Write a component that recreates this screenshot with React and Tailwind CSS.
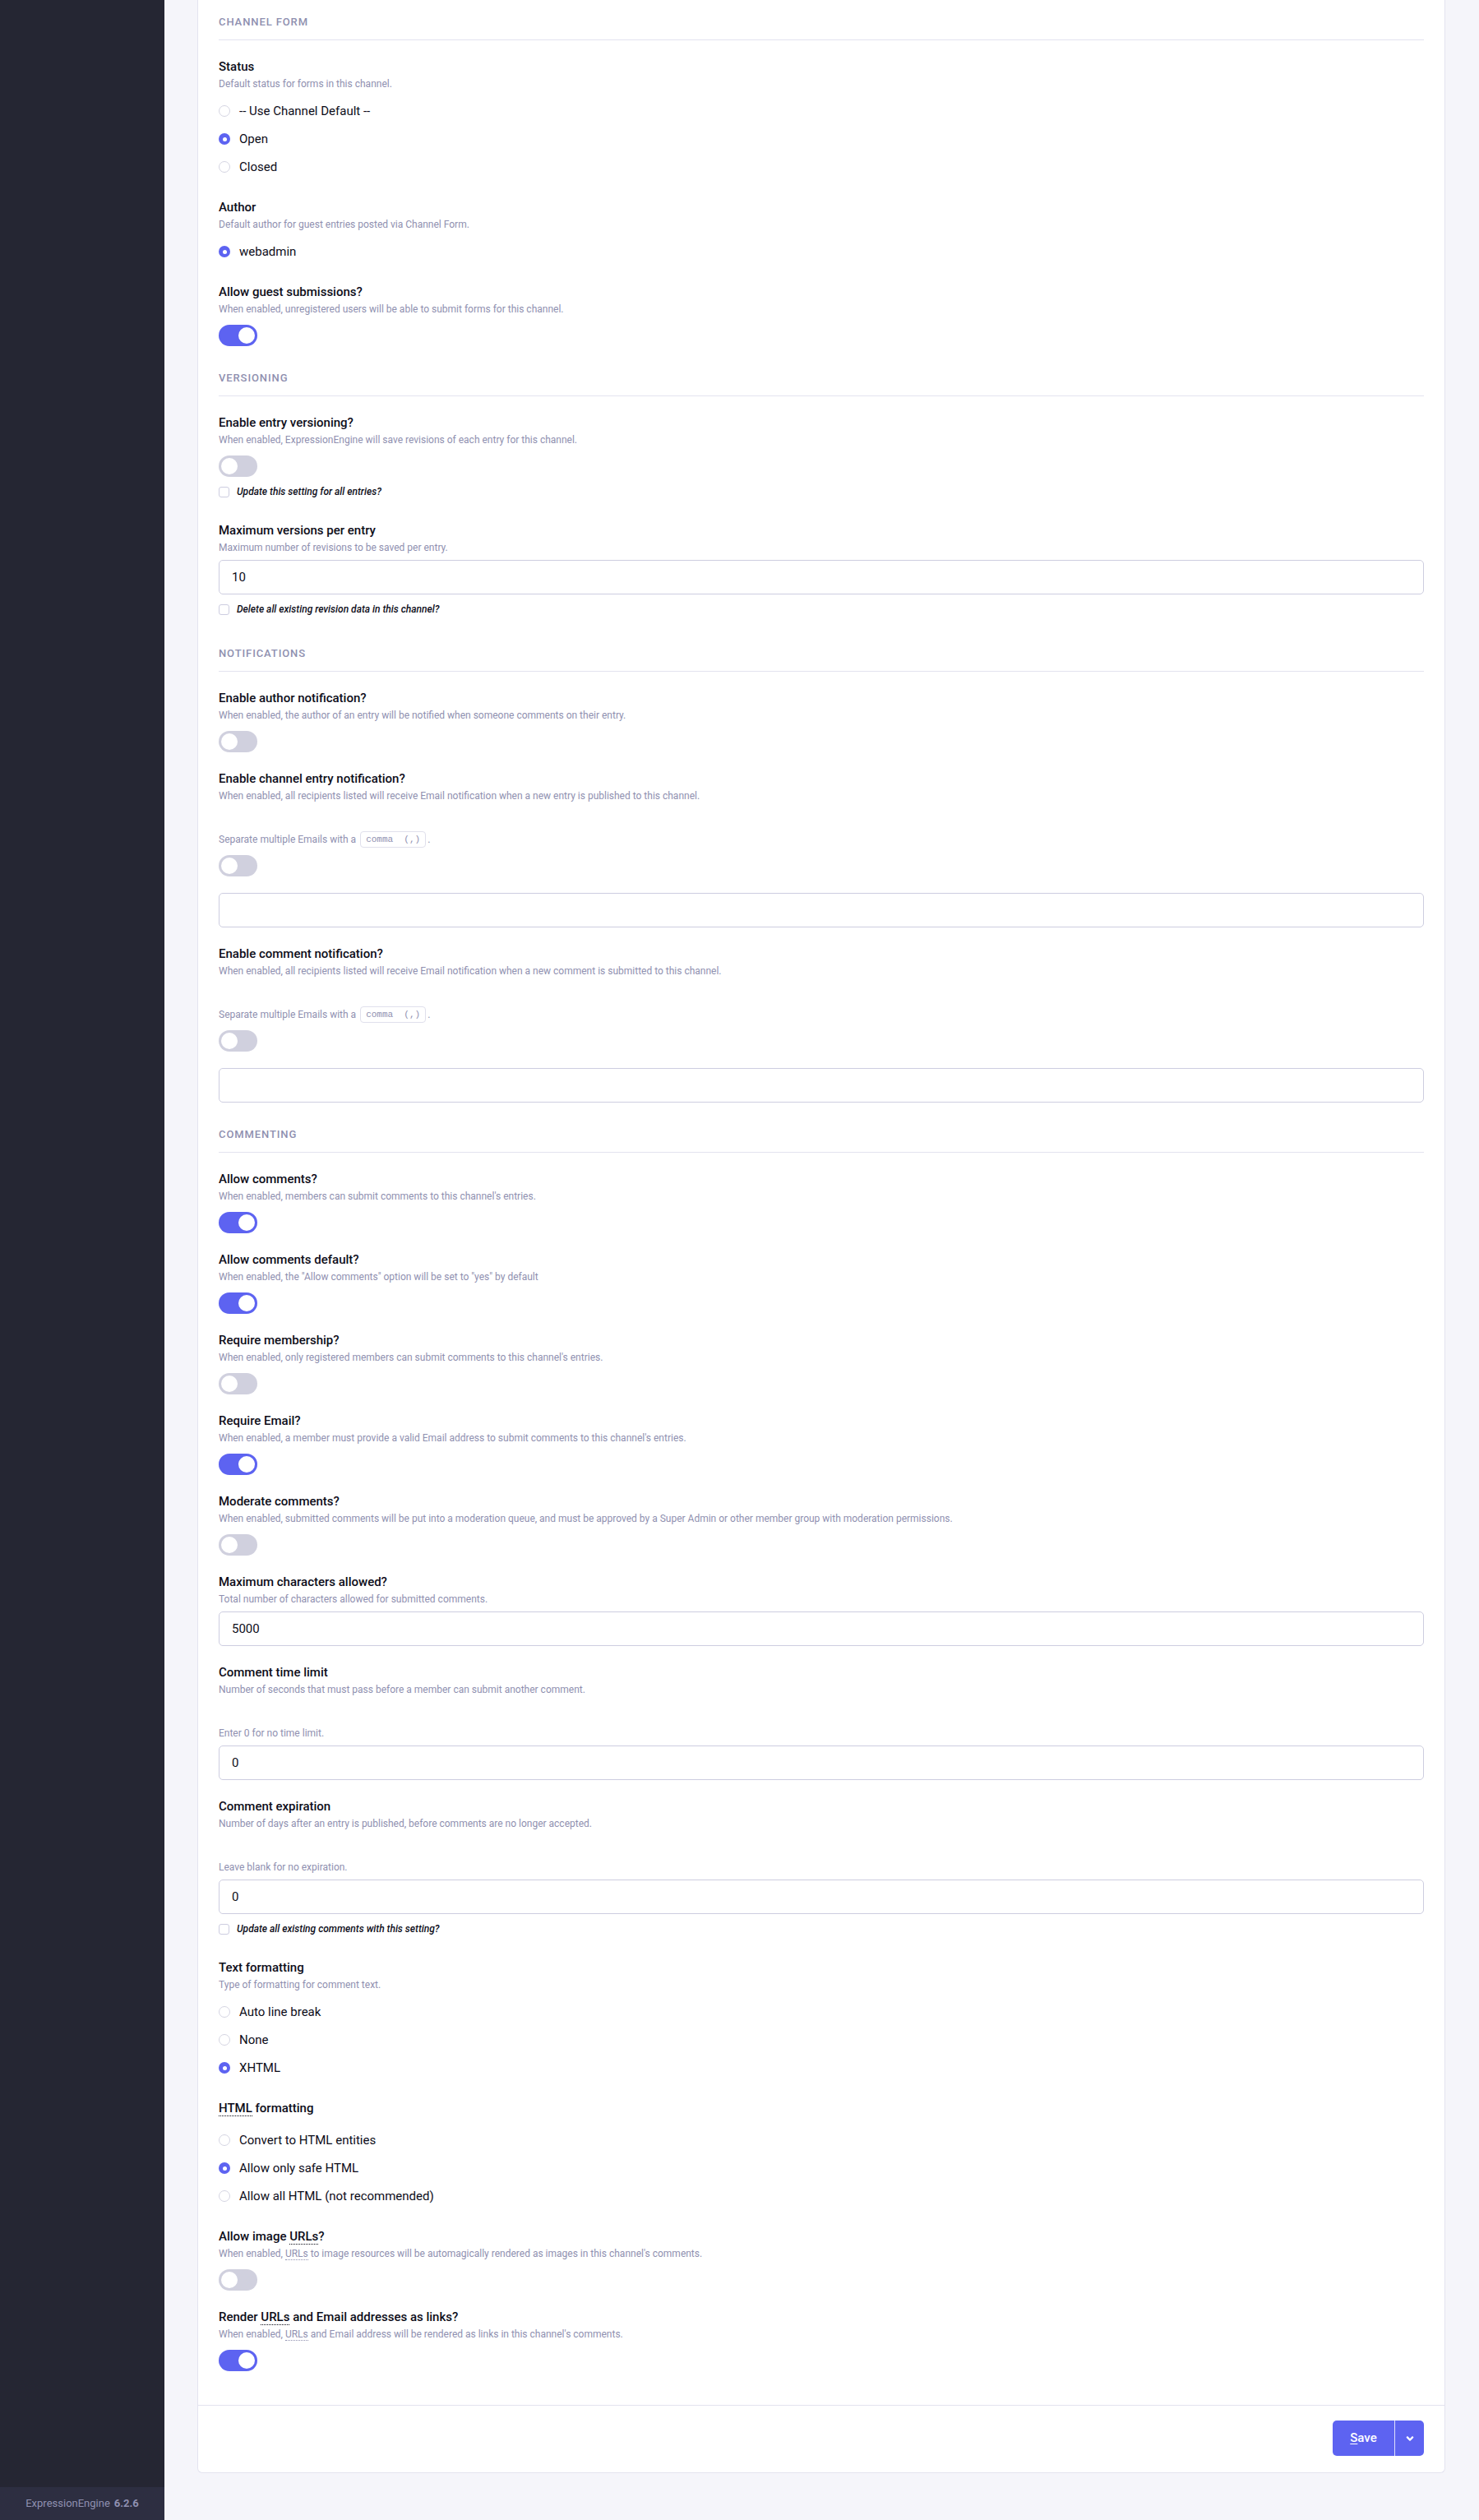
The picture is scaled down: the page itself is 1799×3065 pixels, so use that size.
import React from 'react';
import { FaAngleDown } from 'react-icons/fa';

const font = { fontFamily: 'Roboto, "Noto Sans", sans-serif' };

// section header with rule under it
const SectionHead = ({ title, first }) => (
  <div
    className={`${first ? 'pt-[19px]' : 'pt-[31px]'} pb-[13px] border-b border-[#e3e3ef]`}
  >
    <h3 className="text-[13px] leading-4 font-medium uppercase tracking-[0.9px] text-[#8f90b0]">
      {title}
    </h3>
  </div>
);

const Label = ({ children }) => (
  <div className="text-[15px] leading-5 font-medium text-[#0d0d19]">{children}</div>
);

const Desc = ({ children }) => (
  <div className="mt-[3px] text-[12px] leading-4 text-[#8f90b0]">{children}</div>
);

const Abbr = ({ children }) => (
  <abbr className="no-underline border-b border-dotted border-current">{children}</abbr>
);

const Toggle = ({ on, className = '' }) => (
  <div
    className={`w-[47px] h-[26px] rounded-full p-[3px] flex ${
      on ? 'bg-[#5d63f1] justify-end' : 'bg-[#d0d0de] justify-start'
    } ${className}`}
  >
    <div className="w-[20px] h-[20px] rounded-full bg-white" />
  </div>
);

const Radio = ({ checked }) =>
  checked ? (
    <span className="w-[14px] h-[14px] rounded-full bg-[#5d63f1] flex items-center justify-center">
      <span className="w-[5px] h-[5px] rounded-full bg-white" />
    </span>
  ) : (
    <span className="w-[14px] h-[14px] rounded-full border border-[#d5d5e2] bg-white" />
  );

const RadioList = ({ options, checked, hasDesc }) => (
  <div className={hasDesc ? 'mt-[8px]' : 'mt-[12px]'}>
    {options.map((opt) => (
      <div key={opt} className="h-[34px] flex items-center gap-[11px]">
        <Radio checked={opt === checked} />
        <span className="text-[15px] leading-5 text-[#0d0d19]">{opt}</span>
      </div>
    ))}
  </div>
);

const Check = ({ label }) => (
  <div className="mt-[8px] mb-[5px] h-[20px] flex items-center gap-[9px]">
    <span className="w-[13px] h-[13px] rounded-[3px] border border-[#cdcde0] bg-white" />
    <span className="text-[12px] italic font-medium text-[#0d0d19]">{label}</span>
  </div>
);

const TextInput = ({ value, className = 'mt-[7px]' }) => (
  <div
    className={`${className} h-[42px] rounded-[5px] border border-[#cdcde0] bg-white px-[15px] flex items-center text-[15px] text-[#0d0d19]`}
  >
    {value}
  </div>
);

const EmailNote = () => (
  <div className="mt-[35px] h-[20px] flex items-center text-[12px] text-[#8f90b0]">
    <span>Separate multiple Emails with a</span>
    <code
      className="ml-[5px] h-[20px] px-[6px] flex items-center rounded-[4px] border border-[#e0e0ec] text-[11px] text-[#8f90b0]"
      style={{ fontFamily: '"Liberation Mono", "DejaVu Sans Mono", monospace' }}
    >
      comma&nbsp;&nbsp;(,)
    </code>
    <span className="ml-[2px]">.</span>
  </div>
);

const Note = ({ children }) => (
  <div className="mt-[37px] text-[12px] leading-4 text-[#8f90b0]">{children}</div>
);

const ToggleField = ({ label, desc, on }) => (
  <div className="pt-[22px]">
    <Label>{label}</Label>
    <Desc>{desc}</Desc>
    <Toggle on={on} className="mt-[11px]" />
  </div>
);

const EmailField = ({ label, desc }) => (
  <div className="pt-[22px]">
    <Label>{label}</Label>
    <Desc>{desc}</Desc>
    <EmailNote />
    <Toggle on={false} className="mt-[9px]" />
    <TextInput value="" className="mt-[20px]" />
  </div>
);

export default function App() {
  return (
    <div className="flex h-[3065px] overflow-hidden bg-[#f5f5fa]" style={font}>
      <aside className="w-[200px] shrink-0 bg-[#252633] flex flex-col">
        <div className="mt-auto h-[40px] bg-[#2d2e41] flex items-center justify-center text-[13px] text-[#8f90b0]">
          ExpressionEngine <span className="ml-[5px] font-bold">6.2.6</span>
        </div>
      </aside>

      <main className="flex-1 pl-[40px] pr-[41px] pb-[54px]">
        <div className="bg-white border-x border-b border-[#e3e3ef] rounded-b-[6px]">
          <div className="px-[25px] pb-[41px]">
            <SectionHead title="Channel Form" first />

            <div className="pt-[22px]">
              <Label>Status</Label>
              <Desc>Default status for forms in this channel.</Desc>
              <RadioList
                hasDesc
                options={['-- Use Channel Default --', 'Open', 'Closed']}
                checked="Open"
              />
            </div>

            <div className="pt-[22px]">
              <Label>Author</Label>
              <Desc>Default author for guest entries posted via Channel Form.</Desc>
              <RadioList hasDesc options={['webadmin']} checked="webadmin" />
            </div>

            <ToggleField
              label="Allow guest submissions?"
              desc="When enabled, unregistered users will be able to submit forms for this channel."
              on
            />

            <SectionHead title="Versioning" />

            <div className="pt-[22px]">
              <Label>Enable entry versioning?</Label>
              <Desc>
                When enabled, ExpressionEngine will save revisions of each entry for this channel.
              </Desc>
              <Toggle on={false} className="mt-[11px]" />
              <Check label="Update this setting for all entries?" />
            </div>

            <div className="pt-[22px]">
              <Label>Maximum versions per entry</Label>
              <Desc>Maximum number of revisions to be saved per entry.</Desc>
              <TextInput value="10" />
              <Check label="Delete all existing revision data in this channel?" />
            </div>

            <SectionHead title="Notifications" />

            <ToggleField
              label="Enable author notification?"
              desc="When enabled, the author of an entry will be notified when someone comments on their entry."
              on={false}
            />
            <EmailField
              label="Enable channel entry notification?"
              desc="When enabled, all recipients listed will receive Email notification when a new entry is published to this channel."
            />
            <EmailField
              label="Enable comment notification?"
              desc="When enabled, all recipients listed will receive Email notification when a new comment is submitted to this channel."
            />

            <SectionHead title="Commenting" />

            <ToggleField
              label="Allow comments?"
              desc="When enabled, members can submit comments to this channel's entries."
              on
            />
            <ToggleField
              label="Allow comments default?"
              desc={'When enabled, the "Allow comments" option will be set to "yes" by default'}
              on
            />
            <ToggleField
              label="Require membership?"
              desc="When enabled, only registered members can submit comments to this channel's entries."
              on={false}
            />
            <ToggleField
              label="Require Email?"
              desc="When enabled, a member must provide a valid Email address to submit comments to this channel's entries."
              on
            />
            <ToggleField
              label="Moderate comments?"
              desc="When enabled, submitted comments will be put into a moderation queue, and must be approved by a Super Admin or other member group with moderation permissions."
              on={false}
            />

            <div className="pt-[22px]">
              <Label>Maximum characters allowed?</Label>
              <Desc>Total number of characters allowed for submitted comments.</Desc>
              <TextInput value="5000" />
            </div>

            <div className="pt-[22px]">
              <Label>Comment time limit</Label>
              <Desc>Number of seconds that must pass before a member can submit another comment.</Desc>
              <Note>Enter 0 for no time limit.</Note>
              <TextInput value="0" />
            </div>

            <div className="pt-[22px]">
              <Label>Comment expiration</Label>
              <Desc>
                Number of days after an entry is published, before comments are no longer accepted.
              </Desc>
              <Note>Leave blank for no expiration.</Note>
              <TextInput value="0" />
              <Check label="Update all existing comments with this setting?" />
            </div>

            <div className="pt-[22px]">
              <Label>Text formatting</Label>
              <Desc>Type of formatting for comment text.</Desc>
              <RadioList hasDesc options={['Auto line break', 'None', 'XHTML']} checked="XHTML" />
            </div>

            <div className="pt-[22px]">
              <Label>
                <Abbr>HTML</Abbr> formatting
              </Label>
              <RadioList
                options={[
                  'Convert to HTML entities',
                  'Allow only safe HTML',
                  'Allow all HTML (not recommended)',
                ]}
                checked="Allow only safe HTML"
              />
            </div>

            <ToggleField
              label={
                <>
                  Allow image <Abbr>URLs</Abbr>?
                </>
              }
              desc={
                <>
                  When enabled, <Abbr>URLs</Abbr> to image resources will be automagically rendered
                  as images in this channel's comments.
                </>
              }
              on={false}
            />
            <ToggleField
              label={
                <>
                  Render <Abbr>URLs</Abbr> and Email addresses as links?
                </>
              }
              desc={
                <>
                  When enabled, <Abbr>URLs</Abbr> and Email address will be rendered as links in
                  this channel's comments.
                </>
              }
              on
            />
          </div>

          <div className="border-t border-[#e3e3ef] px-[25px] pt-[18px] pb-[20px] flex justify-end">
            <div className="flex h-[43px] rounded-[5px] overflow-hidden bg-[#5d63f1] text-white">
              <button className="w-[75px] flex items-center justify-center text-[15px] font-medium">
                <span className="underline underline-offset-2">S</span>ave
              </button>
              <div className="w-px bg-white/80" />
              <button className="w-[35px] flex items-center justify-center">
                <FaAngleDown size={14} />
              </button>
            </div>
          </div>
        </div>
      </main>
    </div>
  );
}
